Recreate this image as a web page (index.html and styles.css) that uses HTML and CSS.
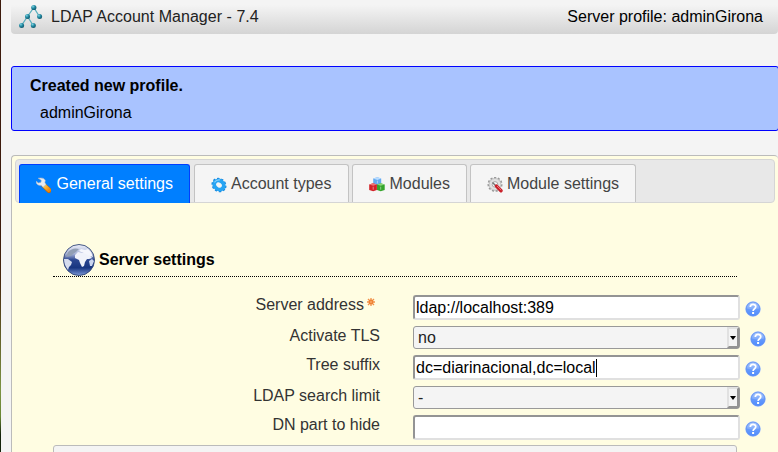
FILE: index.html
```html
<!DOCTYPE html>
<html lang="en">
<head>
<meta charset="utf-8">
<title>LDAP Account Manager</title>
<link rel="stylesheet" href="styles.css">
</head>
<body>
<svg class="defs" width="0" height="0" aria-hidden="true">
  <defs>
    <linearGradient id="helpFill" x1="0" y1="0" x2="0" y2="1"><stop offset="0" stop-color="#9dbffc"/><stop offset=".5" stop-color="#669afb"/><stop offset="1" stop-color="#4f8cff"/></linearGradient>
    <radialGradient id="ball" cx=".35" cy=".3" r=".8"><stop offset="0" stop-color="#7fd3e2"/><stop offset=".45" stop-color="#238ba3"/><stop offset="1" stop-color="#0d4f63"/></radialGradient>
    <linearGradient id="sea" x1="0" y1="0" x2="0" y2="1"><stop offset="0" stop-color="#eef0fa"/><stop offset=".3" stop-color="#a9b4d8"/><stop offset=".5" stop-color="#2b4690"/><stop offset=".75" stop-color="#183681"/><stop offset="1" stop-color="#7c98d8"/></linearGradient>
    <linearGradient id="handle" x1="0" y1="0" x2="1" y2="1"><stop offset="0" stop-color="#ffc94a"/><stop offset="1" stop-color="#ee8a10"/></linearGradient>
    <symbol id="help" viewBox="0 0 16 16">
      <circle cx="8" cy="8" r="7.8" fill="#d5e3fb"/>
      <circle cx="8" cy="8" r="7" fill="url(#helpFill)" stroke="#5b8df0" stroke-width=".9"/>
      <path d="M2 7.5A6 6 0 0 1 14 7.5Q8 9.5 2 7.5" fill="#fff" opacity=".16"/>
      <path d="M5.3 6C5.3 2.5 10.8 2.6 10.8 5.8C10.8 7.8 8.1 7.7 8.1 10" fill="none" stroke="#fff" stroke-width="1.7"/>
      <rect x="7.1" y="11" width="2" height="2" fill="#fff"/>
    </symbol>
  </defs>
</svg>
<div class="page">
  <header class="header">
    <svg class="logo" viewBox="0 0 24 24">
      <path d="M14.8 3.5L8.5 12.5L2.5 21.5M14.8 3.5L20.4 12.5M8.5 12.5L14.2 21.5" fill="none" stroke="#58aebc" stroke-width="1.3"/>
      <g fill="url(#ball)"><circle cx="14.8" cy="3.5" r="2.6"/><circle cx="8.5" cy="12.5" r="2.5"/><circle cx="20.6" cy="12.5" r="2.5"/><circle cx="2.6" cy="21.4" r="2.5"/><circle cx="14.3" cy="21.4" r="2.5"/></g>
    </svg>
    <span class="product">LDAP Account Manager - 7.4</span>
    <span class="profile">Server profile: adminGirona</span>
  </header>

  <section class="message">
    <strong>Created new profile.</strong>
    <p>adminGirona</p>
  </section>

  <main class="panel">
    <nav class="tabs">
      <a class="tab active"><svg viewBox="0 0 16 16">
        <path d="M8.2 8.5L13.4 13.6" stroke="#c66c0c" stroke-width="5.2" stroke-linecap="round"/>
        <path d="M8.5 8.8L13.3 13.2" stroke="url(#handle)" stroke-width="4" stroke-linecap="round"/>
        <path d="M2.2 1Q8 -.2 9.6 3.2L9.2 5.7L10.4 7.5L7.3 10.4L5.5 8.5Q.4 8.8 0 4L2.6 5.9L5.2 5.1L5.4 3Z" fill="#e8ebf0" stroke="#a9b3c2" stroke-width=".6"/>
      </svg>General settings</a>
      <a class="tab"><svg viewBox="0 0 16 16">
        <ellipse cx="8" cy="8" rx="6.8" ry="5.9" transform="rotate(35 8 8)" fill="none" stroke="#1687dd" stroke-width="2" stroke-dasharray="2.3 1.7"/>
        <ellipse cx="8" cy="8" rx="5" ry="4.2" transform="rotate(35 8 8)" fill="none" stroke="#27a4f3" stroke-width="3.8"/>
        <path d="M3.4 5.3Q5.6 2.4 9 3" fill="none" stroke="#82cffc" stroke-width="1.1"/>
      </svg>Account types</a>
      <a class="tab modules"><svg viewBox="0 0 16 16">
        <path d="M4.2 1.5L8.4 .3L12.2 1.5V8L8.5 9L4.2 8Z" fill="#64aaf0"/><path d="M4.2 1.5L8.4 .3L12.2 1.5L8.4 2.9Z" fill="#b9dcff"/>
        <path d="M.2 7.4L4 6.3L7.9 7.4V13.1L4.2 14.3L.2 13.1Z" fill="#d32228"/><path d="M.2 7.4L4 6.3L7.9 7.4L4.2 8.7Z" fill="#ee7777"/>
        <path d="M8 7.4L11.7 6.3L15.7 7.4V13L11.7 14.2L8 13Z" fill="#35a52c"/><path d="M8 7.4L11.7 6.3L15.7 7.4L11.7 8.7Z" fill="#8fd57d"/>
        <path d="M8.4 3.6V6.5M4.2 9.7V12.7M11.7 9.7V12.7" stroke="#fff" stroke-width=".9" opacity=".5"/>
      </svg>Modules</a>
      <a class="tab"><svg viewBox="0 0 16 16">
        <circle cx="8" cy="7.4" r="6.7" fill="none" stroke="#999" stroke-width="1.6" stroke-dasharray="2.2 1.6"/>
        <circle cx="8" cy="7.4" r="5.9" fill="#e1e1e1" stroke="#b0b0b0" stroke-width=".7"/>
        <circle cx="8" cy="7.4" r="2.8" fill="#f8f8f8" stroke="#999" stroke-width=".8"/>
        <path d="M5.5 5.6L9.5 9.5" stroke="#777" stroke-width="1.4"/>
        <path d="M9.5 9.1L14 13.8" stroke="#c91f29" stroke-width="3.4" stroke-linecap="round"/><path d="M10 8.9L14.2 13" stroke="#f27c80" stroke-width="1"/>
      </svg>Module settings</a>
    </nav>

    <div class="content">
      <h2 class="title"><svg viewBox="0 0 32 32">
        <circle cx="16" cy="16" r="15.5" fill="url(#sea)" stroke="#334777" stroke-width=".9"/>
        <path d="M5 8Q10 3 16 5L13 8L10 10L8 12L3 13Z" fill="#929fb5"/>
        <path d="M1 15L5 15L9 18L8 21L6 23L5 26Q1 21 1 15Z" fill="#d5dcee"/>
        <path d="M12 11L15 8L20 9L25 9L29 14L26 15L24 15L22 18L21 22L19 23L17 19L16 16L12 14Z" fill="#f0f2fa"/>
        <path d="M16 7L18 5L22 6L25 5L28 8L30 13L27 12L23 10Z" fill="#f5f6fc"/>
        <path d="M26 17L29 15L31 17L29 22L27 22Z" fill="#cbd6ef"/>
      </svg>Server settings</h2>

      <div class="form">
        <div class="row"><label>Server address<svg class="required" viewBox="0 0 8 8"><path d="M4 0V8M0 4H8M1 1L7 7M7 1L1 7" stroke="#f2914a" stroke-width="1.3"/><circle cx="4" cy="4" r="2.4" fill="#ef8234"/><circle cx="4" cy="4" r=".8" fill="#ffc48e"/></svg></label><div class="field">ldap://localhost:389</div><svg class="help"><use href="#help"/></svg></div>
        <div class="row choice"><label>Activate TLS</label><div class="select">no<span class="arrow"></span></div><svg class="help"><use href="#help"/></svg></div>
        <div class="row"><label>Tree suffix</label><div class="field">dc=diarinacional,dc=local<span class="caret"></span></div><svg class="help"><use href="#help"/></svg></div>
        <div class="row choice"><label>LDAP search limit</label><div class="select">-<span class="arrow"></span></div><svg class="help"><use href="#help"/></svg></div>
        <div class="row"><label>DN part to hide</label><div class="field"></div><svg class="help"><use href="#help"/></svg></div>
      </div>
      <div class="group"></div>
    </div>
  </main>
</div>
</body>
</html>
```
FILE: styles.css
```css
* { box-sizing: border-box; }
body {
  margin: 0;
  height: 452px;
  overflow: hidden;
  background: #f4f4f4;
  color: #000;
  font: 16px/18px "Liberation Sans", Arial, sans-serif;
}
.defs { display: block; }
.page {
  height: 452px;
  padding-left: 10px;
  overflow: hidden;
  border-left: 1px solid;
  border-image: linear-gradient(#3c1a0c 0 50%, #49290f 62%, #7d9345 86%, #698635 92%, #15230b 96%) 1;
}
.header {
  display: flex;
  align-items: flex-start;
  height: 34px;
  padding: 8px 15px 0 8px;
  background: linear-gradient(#f4f4f4 5px, #d4d4d4);
  border-radius: 0 0 4px 4px;
}
.logo { width: 24px; height: 24px; margin: -4px 8px 0 0; }
.product { color: #222; letter-spacing: .03px; }
.profile { margin-left: auto; }
.message {
  height: 65px;
  margin: 32px -1px 0 0;
  padding: 10px 18px;
  border: 1px solid #00f;
  border-radius: 3px;
  background: #a9c3ff;
}
.message strong { display: block; }
.message p { margin: 9px 0 0 10px; }
.panel {
  height: 297px;
  margin-top: 24px;
  padding: 3px;
  overflow: hidden;
  border: 1px solid #bbb;
  border-width: 1px 0 0 1px;
  border-radius: 4px 4px 0 0;
  background: #fffde2;
}
.tabs {
  display: flex;
  align-items: flex-start;
  gap: 3px;
  width: 760px;
  height: 44px;
  padding: 4px 3px 0;
  background: #e8e8e8;
  border: 1px solid #d5d5d5;
  border-radius: 4px;
}
.tab {
  display: flex;
  align-items: flex-start;
  height: 38px;
  padding: 10px 16px 0;
  border: 1px solid #c3c3c3;
  border-bottom: 0;
  border-radius: 3px 3px 0 0;
  background: #f5f5f5;
  color: #444;
  white-space: nowrap;
}
.tab svg { width: 16px; height: 16px; margin: 2px 4px 0 0; }
.tab.active { width: 171px; height: 39px; margin-right: 1px; background: #007fff; border-color: #003eff; color: #fff; }
.tab.active svg, .tab.modules svg { margin-right: 5px; }
.content { padding: 41px 0 0 38px; }
.title {
  display: flex;
  align-items: center;
  gap: 4px;
  width: 684px;
  height: 33px;
  margin: 0;
  padding-left: 10px;
  border-bottom: 1px dotted #000;
  font-size: 16px;
}
.title svg { width: 32px; height: 32px; }
.form { padding-top: 18px; }
.row { display: flex; align-items: flex-start; height: 31px; color: #333; }
.row:nth-child(even) { height: 29px; }
.row:last-child { height: 30px; }
.row label {
  display: flex;
  justify-content: flex-end;
  width: 327px;
  margin-right: 33px;
  padding-top: 1px;
}
.required { width: 8px; height: 8px; margin: 2px 5px 0 3px; }
.field {
  display: flex;
  align-items: center;
  width: 327px;
  height: 25px;
  padding: 0 1px;
  border: 2px solid;
  border-color: #949494 #e0e0e0 #e0e0e0 #949494;
  border-radius: 3px;
  background: #fff;
  color: #000;
}
.caret { width: 1px; height: 18px; background: #000; }
.select {
  display: flex;
  align-items: center;
  justify-content: space-between;
  width: 327px;
  height: 23px;
  padding-left: 4px;
  border: 1px solid #999;
  border-radius: 3px;
  background: #f4f4f4;
  color: #222;
}
.arrow {
  display: grid;
  place-items: center;
  width: 12px;
  height: 21px;
  border: 2px solid;
  border-color: #e1e1e1 #939393 #939393 #e1e1e1;
}
.arrow::after {
  content: "";
  border: 3px solid transparent;
  border-top: 4px solid #000;
  border-bottom: 0;
}
.help { width: 16px; height: 16px; margin: 6px 0 0 5px; }
.choice .help { margin: 5px 0 0 10px; }
.group {
  width: 684px;
  height: 20px;
  border: 1px solid #bbb;
  border-radius: 3px;
  background: #f4f4f4;
}
```
